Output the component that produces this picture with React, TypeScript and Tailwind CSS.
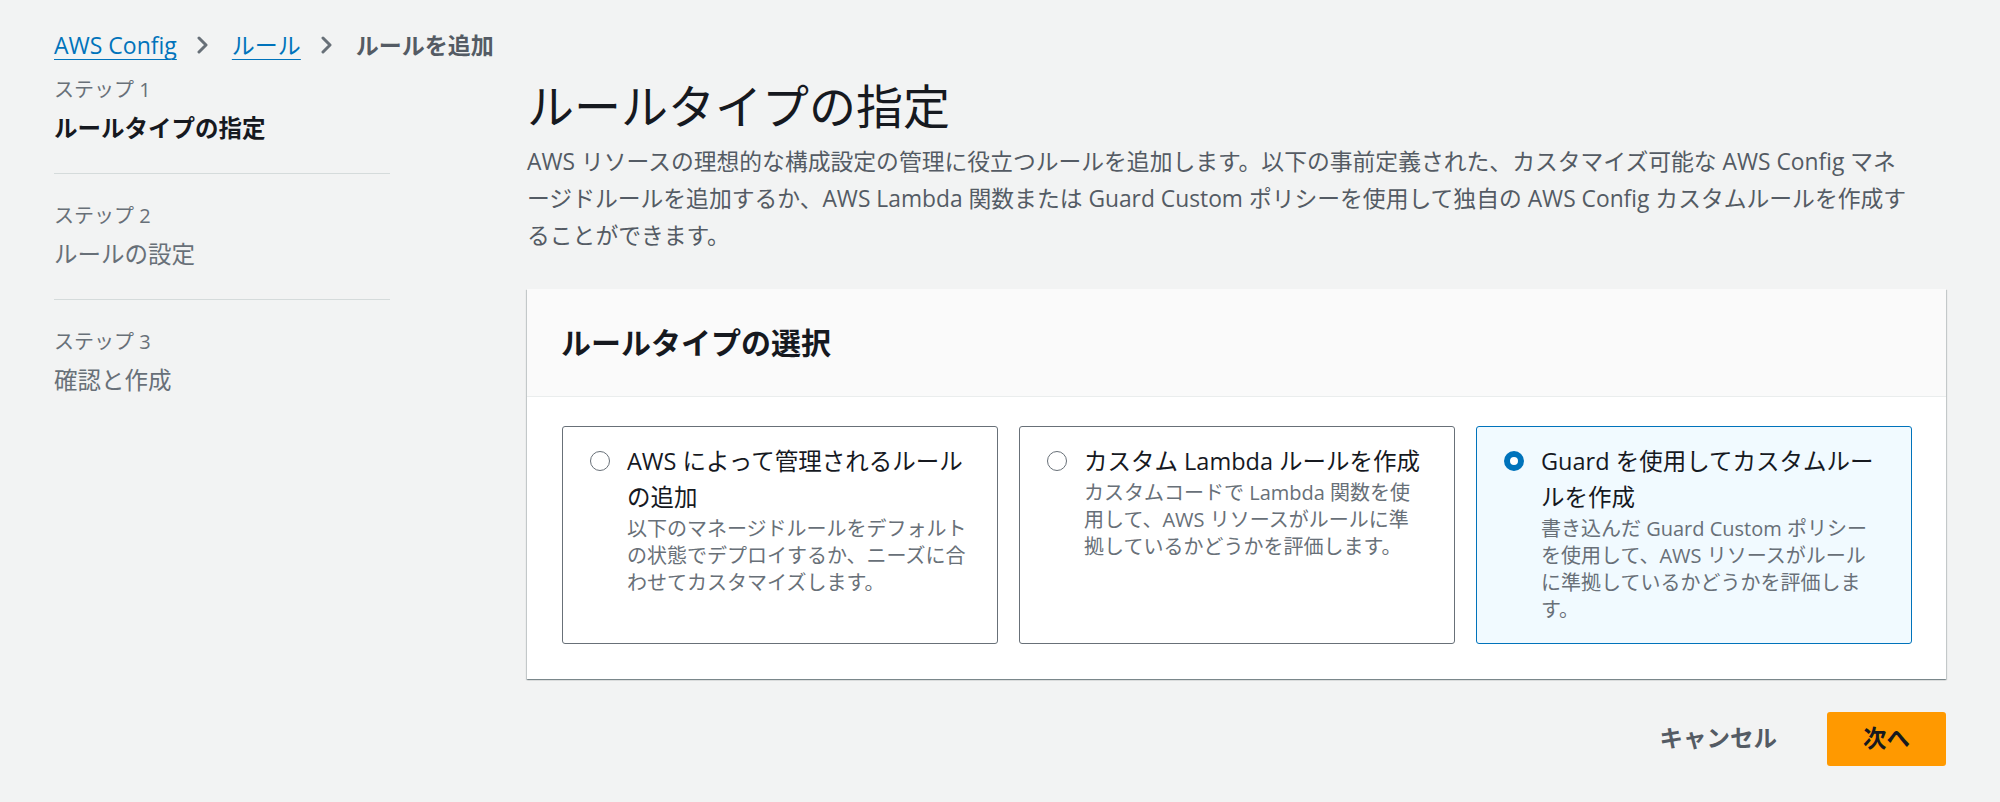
import { Fragment } from 'react';

const font = "font-['Open_Sans','Noto_Sans_CJK_JP',sans-serif]";

interface RuleTile {
  title: string[];
  desc: string[];
  selected?: boolean;
}

const tiles: RuleTile[] = [
  {
    title: ['AWS によって管理されるルール', 'の追加'],
    desc: [
      '以下のマネージドルールをデフォルト',
      'の状態でデプロイするか、ニーズに合',
      'わせてカスタマイズします。',
    ],
  },
  {
    title: ['カスタム Lambda ルールを作成'],
    desc: [
      'カスタムコードで Lambda 関数を使',
      '用して、AWS リソースがルールに準',
      '拠しているかどうかを評価します。',
    ],
  },
  {
    title: ['Guard を使用してカスタムルー', 'ルを作成'],
    desc: [
      '書き込んだ Guard Custom ポリシー',
      'を使用して、AWS リソースがルール',
      'に準拠しているかどうかを評価しま',
      'す。',
    ],
    selected: true,
  },
];

const steps = [
  { label: 'ステップ 1', title: 'ルールタイプの指定', active: true },
  { label: 'ステップ 2', title: 'ルールの設定' },
  { label: 'ステップ 3', title: '確認と作成' },
];

function Chevron() {
  return (
    <svg width="14" height="18" viewBox="0 0 14 18" className="ml-[19px] mr-[22px] shrink-0" fill="none">
      <path d="M3 2l7 7-7 7" stroke="#687078" strokeWidth="3" strokeLinecap="round" strokeLinejoin="round" />
    </svg>
  );
}

function Lines({ lines }: { lines: string[] }) {
  return (
    <>
      {lines.map((l, i) => (
        <Fragment key={i}>
          {i > 0 && <br />}
          {l}
        </Fragment>
      ))}
    </>
  );
}

export default function App() {
  return (
    <div className={`min-h-screen bg-[#f2f3f3] ${font} pl-[54px] pr-[54px] pt-[29px] text-[#16191f]`}>
      {/* Breadcrumb */}
      <nav className="flex items-center h-[32px] text-[23px] leading-[32px]">
        <a href="#" className="text-[#0073bb] underline underline-offset-[5px] decoration-1">AWS Config</a>
        <Chevron />
        <a href="#" className="text-[#0073bb] underline underline-offset-[5px] decoration-1">ルール</a>
        <Chevron />
        <span className="font-bold text-[#545b64]">ルールを追加</span>
      </nav>

      <div className="flex mt-[16px]">
        {/* Steps */}
        <aside className="w-[336px] shrink-0">
          {steps.map((s, i) => (
            <div
              key={s.label}
              className={`${i > 0 ? 'pt-[29px]' : ''} ${i < steps.length - 1 ? 'pb-[29px] border-b border-[#d5dbdb]' : ''}`}
            >
              <div className="text-[20px] leading-[26px] text-[#687078]">{s.label}</div>
              <div
                className={`mt-[9px] text-[23.5px] leading-[32px] ${s.active ? 'font-bold text-[#16191f]' : 'text-[#687078]'}`}
              >
                {s.title}
              </div>
            </div>
          ))}
        </aside>

        {/* Main */}
        <main className="ml-[137px] flex-1">
          <h1 className="mt-[3px] text-[47px] leading-[52px] font-normal">ルールタイプの指定</h1>
          <p className="mt-[11px] text-[22.8px] leading-[37px] text-[#545b64] whitespace-nowrap">
            AWS リソースの理想的な構成設定の管理に役立つルールを追加します。以下の事前定義された、カスタマイズ可能な AWS Config マネ
            <br />
            ージドルールを追加するか、AWS Lambda 関数または Guard Custom ポリシーを使用して独自の AWS Config カスタムルールを作成す
            <br />
            ることができます。
          </p>

          <section className="mt-[35px] bg-white shadow-[0_1px_1px_0_rgba(0,28,36,0.3),1px_1px_1px_0_rgba(0,28,36,0.15),-1px_1px_1px_0_rgba(0,28,36,0.15)]">
            <div className="bg-[#fafafa] border-b border-[#eaeded] px-[34px] pt-[36px] pb-[35px]">
              <h2 className="text-[30px] leading-[36px] font-bold">ルールタイプの選択</h2>
            </div>
            <div className="grid grid-cols-3 gap-[21px] pl-[35px] pr-[34px] pt-[29px] pb-[35px]">
              {tiles.map((t, i) => (
                <div
                  key={i}
                  className={`flex gap-[17px] rounded-[3px] border pt-[16px] pl-[27px] pr-[20px] pb-[20px] ${
                    t.selected ? 'border-[#0073bb] bg-[#f1faff]' : 'border-[#687078] bg-white'
                  }`}
                >
                  <div className="h-[36px] flex items-center shrink-0">
                    {t.selected ? (
                      <span className="block w-[20px] h-[20px] rounded-full border-[6px] border-[#0073bb] bg-white" />
                    ) : (
                      <span className="block w-[20px] h-[20px] rounded-full border-[1.5px] border-[#687078] bg-white" />
                    )}
                  </div>
                  <div className="whitespace-nowrap">
                    <div className="text-[23.5px] leading-[36px] text-[#16191f]">
                      <Lines lines={t.title} />
                    </div>
                    <div className="text-[20px] leading-[27px] text-[#687078]">
                      <Lines lines={t.desc} />
                    </div>
                  </div>
                </div>
              ))}
            </div>
          </section>

          <div className="flex justify-end items-center mt-[33px]">
            <button className="mr-[50px] text-[23.5px] font-bold text-[#545b64]">キャンセル</button>
            <button className="w-[119px] h-[54px] rounded-[3px] bg-[#ff9900] text-[23.5px] font-bold text-[#16191f]">
              次へ
            </button>
          </div>
        </main>
      </div>
    </div>
  );
}
